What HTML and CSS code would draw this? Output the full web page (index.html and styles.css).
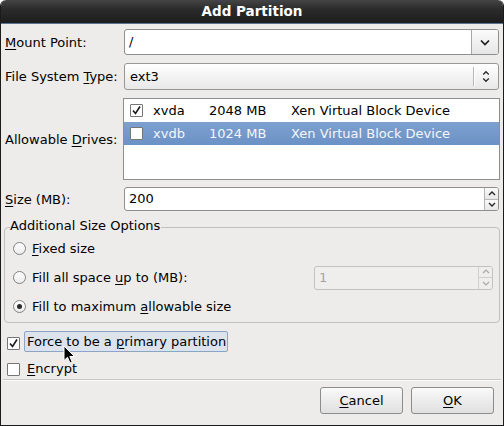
FILE: index.html
```html
<!DOCTYPE html>
<html>
<head>
<meta charset="utf-8">
<title>Add Partition</title>
<link rel="stylesheet" href="styles.css">
</head>
<body>
<div class="window">
  <div class="titlebar">Add Partition</div>
  <div class="content">
    <div class="row r-mount">
      <label class="lbl"><u>M</u>ount Point:</label>
      <div class="combo-entry">
        <div class="entry-text">/</div>
        <div class="combo-btn">
          <svg width="10" height="7" viewBox="0 0 10 7"><path d="M1 1.5 L5 5.5 L9 1.5" fill="none" stroke="#1e1e1e" stroke-width="1.7"/></svg>
        </div>
      </div>
    </div>
    <div class="row r-fs">
      <label class="lbl">File System <u>T</u>ype:</label>
      <div class="combo">
        <span class="combo-text">ext3</span>
        <span class="combo-sep"></span>
        <svg class="updown" width="8" height="13" viewBox="0 0 8 13"><path d="M1.2 4.5 L4 1.7 L6.8 4.5 M1.2 8.5 L4 11.3 L6.8 8.5" fill="none" stroke="#2a2a2a" stroke-width="1.3"/></svg>
      </div>
    </div>
    <div class="row r-drives">
      <label class="lbl">Allowable <u>D</u>rives:</label>
      <div class="list">
        <div class="lrow">
          <span class="cb"><svg width="11" height="11" viewBox="0 0 11 11"><path d="M2 5.5 L4.5 8.5 L9 1.5" fill="none" stroke="#1a1a1a" stroke-width="1.6"/></svg></span>
          <span class="c-name">xvda</span><span class="c-size">2048 MB</span><span class="c-desc">Xen Virtual Block Device</span>
        </div>
        <div class="lrow sel">
          <span class="cb"></span>
          <span class="c-name">xvdb</span><span class="c-size">1024 MB</span><span class="c-desc">Xen Virtual Block Device</span>
        </div>
      </div>
    </div>
    <div class="row r-size">
      <label class="lbl"><u>S</u>ize (MB):</label>
      <div class="spin">
        <div class="spin-text">200</div>
        <div class="spin-btns">
          <div class="sb"><svg width="8" height="5" viewBox="0 0 8 5"><path d="M1 4 L4 1 L7 4" fill="none" stroke="#222" stroke-width="1.3"/></svg></div>
          <div class="sb"><svg width="8" height="5" viewBox="0 0 8 5"><path d="M1 1 L4 4 L7 1" fill="none" stroke="#222" stroke-width="1.3"/></svg></div>
        </div>
      </div>
    </div>
    <div class="frame">
      <span class="frame-label">Additional Size Options</span>
      <div class="fopt">
        <span class="radio"></span><span class="otext"><u>F</u>ixed size</span>
      </div>
      <div class="fopt">
        <span class="radio"></span><span class="otext">Fill all space <u>u</u>p to (MB):</span>
        <div class="spin disabled">
          <div class="spin-text">1</div>
          <div class="spin-btns">
            <div class="sb"><svg width="8" height="5" viewBox="0 0 8 5"><path d="M1 4 L4 1 L7 4" fill="none" stroke="#a9a9a9" stroke-width="1.2"/></svg></div>
            <div class="sb"><svg width="8" height="5" viewBox="0 0 8 5"><path d="M1 1 L4 4 L7 1" fill="none" stroke="#a9a9a9" stroke-width="1.2"/></svg></div>
          </div>
        </div>
      </div>
      <div class="fopt">
        <span class="radio on"></span><span class="otext">Fill to maximum <u>a</u>llowable size</span>
      </div>
    </div>
    <div class="check-row r-force">
      <span class="cb"><svg width="11" height="11" viewBox="0 0 11 11"><path d="M2 5.5 L4.5 8.5 L9 1.5" fill="none" stroke="#1a1a1a" stroke-width="1.6"/></svg></span>
      <span class="ctext focus">Force to be a <u>p</u>rimary partition</span>
    </div>
    <div class="check-row r-encrypt">
      <span class="cb"></span>
      <span class="ctext"><u>E</u>ncrypt</span>
    </div>
    <div class="separator"></div>
    <div class="buttons">
      <button class="btn"><u>C</u>ancel</button>
      <button class="btn"><u>O</u>K</button>
    </div>
  </div>
  <svg class="cursor" width="13" height="20" viewBox="0 0 13 20"><path d="M1 1 L1 15.5 L4.5 12.3 L7 18 L9.2 17 L6.8 11.5 L11.5 11.5 Z" fill="#000" stroke="#fff" stroke-width="1" stroke-linejoin="round"/></svg>
</div>
</body>
</html>
```

FILE: styles.css
```css
* { box-sizing: border-box; }
html, body { margin: 0; padding: 0; background: #ffffff; }
body {
  font-family: "DejaVu Sans", sans-serif;
  font-size: 13px;
  color: #000;
}
u { text-underline-offset: 2px; text-decoration-thickness: 1px; }

.window {
  position: relative;
  width: 504px;
  height: 426px;
  background: #edeceb;
  border: 1px solid #1b1b1b;
  border-top: 0;
  border-radius: 6px 6px 0 0;
  overflow: hidden;
  display: flex;
  flex-direction: column;
}
.titlebar {
  height: 24px;
  margin: 0 -1px;
  background: linear-gradient(#454545, #2b2b2b 40%, #1d1d1d);
  border-bottom: 1px solid #587593;
  border-radius: 6px 6px 0 0;
  color: #fff;
  font-weight: bold;
  font-size: 13.5px;
  line-height: 23px;
  text-align: center;
}
.content {
  flex: 1;
  display: flex;
  flex-direction: column;
  padding: 0 4px 0 4px;
}

.row { display: flex; align-items: center; }
.lbl { width: 119px; flex: none; }
.r-mount { margin-top: 5px; height: 26px; }
.r-fs { margin-top: 8px; height: 27px; }
.r-drives { margin-top: 8px; height: 82px; }
.r-size { margin-top: 7px; height: 24px; }

.combo-entry {
  flex: 1;
  height: 100%;
  display: flex;
  border: 1px solid #8f8f8f;
  border-radius: 3px;
  background: #fff;
  overflow: hidden;
}
.entry-text { flex: 1; padding-left: 4px; line-height: 24px; }
.combo-btn {
  width: 27px;
  border-left: 1px solid #a7a7a7;
  background: linear-gradient(#fbfbfb, #e6e6e6);
  display: flex;
  align-items: center;
  justify-content: center;
}

.combo {
  flex: 1;
  height: 100%;
  display: flex;
  align-items: center;
  border: 1px solid #979797;
  border-radius: 3px;
  background: linear-gradient(#ffffff, #f1f1f1 60%, #e8e8e8);
}
.combo-text { flex: 1; padding-left: 5px; }
.combo-sep {
  width: 2px;
  height: 19px;
  border-left: 1px solid #b5b5b5;
  border-right: 1px solid #ffffff;
  margin-right: 7px;
}
.updown { margin-right: 8px; }

.list {
  flex: 1;
  height: 100%;
  margin-left: -1px;
  margin-right: -1px;
  background: #fff;
  border: 1px solid #8e8e8e;
  display: flex;
  flex-direction: column;
  align-self: stretch;
}
.lrow {
  height: 23px;
  display: flex;
  align-items: center;
  padding-left: 6px;
}
.lrow.sel {
  background: linear-gradient(#7da0cf, #6b92c6);
  color: #f4f6fa;
}
.cb {
  width: 13px;
  height: 13px;
  flex: none;
  border: 1px solid #767676;
  background: #fff;
  border-radius: 1px;
  display: flex;
  align-items: center;
  justify-content: center;
}
.lrow .cb { margin-right: 10px; }
.c-name { width: 56px; }
.c-size { width: 82px; }

.spin {
  flex: 1;
  height: 100%;
  display: flex;
  border: 1px solid #8f8f8f;
  border-radius: 3px;
  background: #fff;
  overflow: hidden;
}
.spin-text { flex: 1; padding-left: 4px; line-height: 22px; }
.spin-btns {
  width: 14px;
  display: flex;
  flex-direction: column;
  border-left: 1px solid #b3b3b3;
}
.sb {
  flex: 1;
  display: flex;
  align-items: center;
  justify-content: center;
  background: linear-gradient(#fafafa, #e7e7e7);
}
.sb + .sb { border-top: 1px solid #b8b8b8; }

.frame {
  position: relative;
  margin: 16px -1px 0 -1px;
  height: 96px;
  border: 1px solid #c2c0be;
  border-radius: 4px;
  padding: 6px 6px 0 8px;
  display: flex;
  flex-direction: column;
}
.frame-label {
  position: absolute;
  left: 5px;
  top: -10px;
  background: #edeceb;
  padding: 0 1px 0 0;
  line-height: 16px;
}
.fopt {
  height: 29px;
  display: flex;
  align-items: center;
}
.radio {
  width: 13px;
  height: 13px;
  flex: none;
  border-radius: 50%;
  border: 1px solid #818181;
  background: linear-gradient(#ffffff, #ececec);
  margin-right: 6px;
  display: flex;
  align-items: center;
  justify-content: center;
}
.radio.on::after {
  content: "";
  width: 5px;
  height: 5px;
  border-radius: 50%;
  background: #2a2a2a;
}
.spin.disabled {
  flex: none;
  width: 179px;
  height: 24px;
  margin-left: auto;
  border-color: #c2c2c2;
  background: #efeeed;
  color: #a4a4a4;
}
.spin.disabled .spin-btns { border-left-color: #cfcfcf; }
.spin.disabled .sb { background: #efeeed; }
.spin.disabled .sb + .sb { border-top-color: #cfcfcf; }

.check-row {
  display: flex;
  align-items: center;
  padding-left: 2px;
}
.r-force { margin-top: 8px; height: 21px; }
.r-encrypt { margin-top: 6px; height: 21px; }
.check-row .cb { margin-right: 5px; }
.r-force .cb { margin-top: 3px; }
.r-encrypt .cb { margin-top: 2px; }
.ctext { padding: 0 2px 0 2px; line-height: 19px; }
.ctext.focus {
  background: #dce3ed;
  border: 1px solid #8ca4c6;
  border-radius: 2px;
  padding: 0 1px 0 2px;
  margin-left: -1px;
}

.separator {
  height: 2px;
  margin: 0 -2px;
  border-top: 1px solid #c9c7c5;
  border-bottom: 1px solid #fbfbfb;
}
.buttons {
  margin-top: 6px;
  display: flex;
  justify-content: flex-end;
  gap: 8px;
  padding-right: 5px;
}
.btn {
  width: 83px;
  height: 27px;
  font-family: "DejaVu Sans", sans-serif;
  font-size: 13px;
  color: #000;
  border: 1px solid #8c8c8c;
  border-radius: 3px;
  background: linear-gradient(#fafafa, #ececec 50%, #e0e0e0);
  padding: 0;
}

.cursor {
  position: absolute;
  left: 62px;
  top: 345px;
}
```
